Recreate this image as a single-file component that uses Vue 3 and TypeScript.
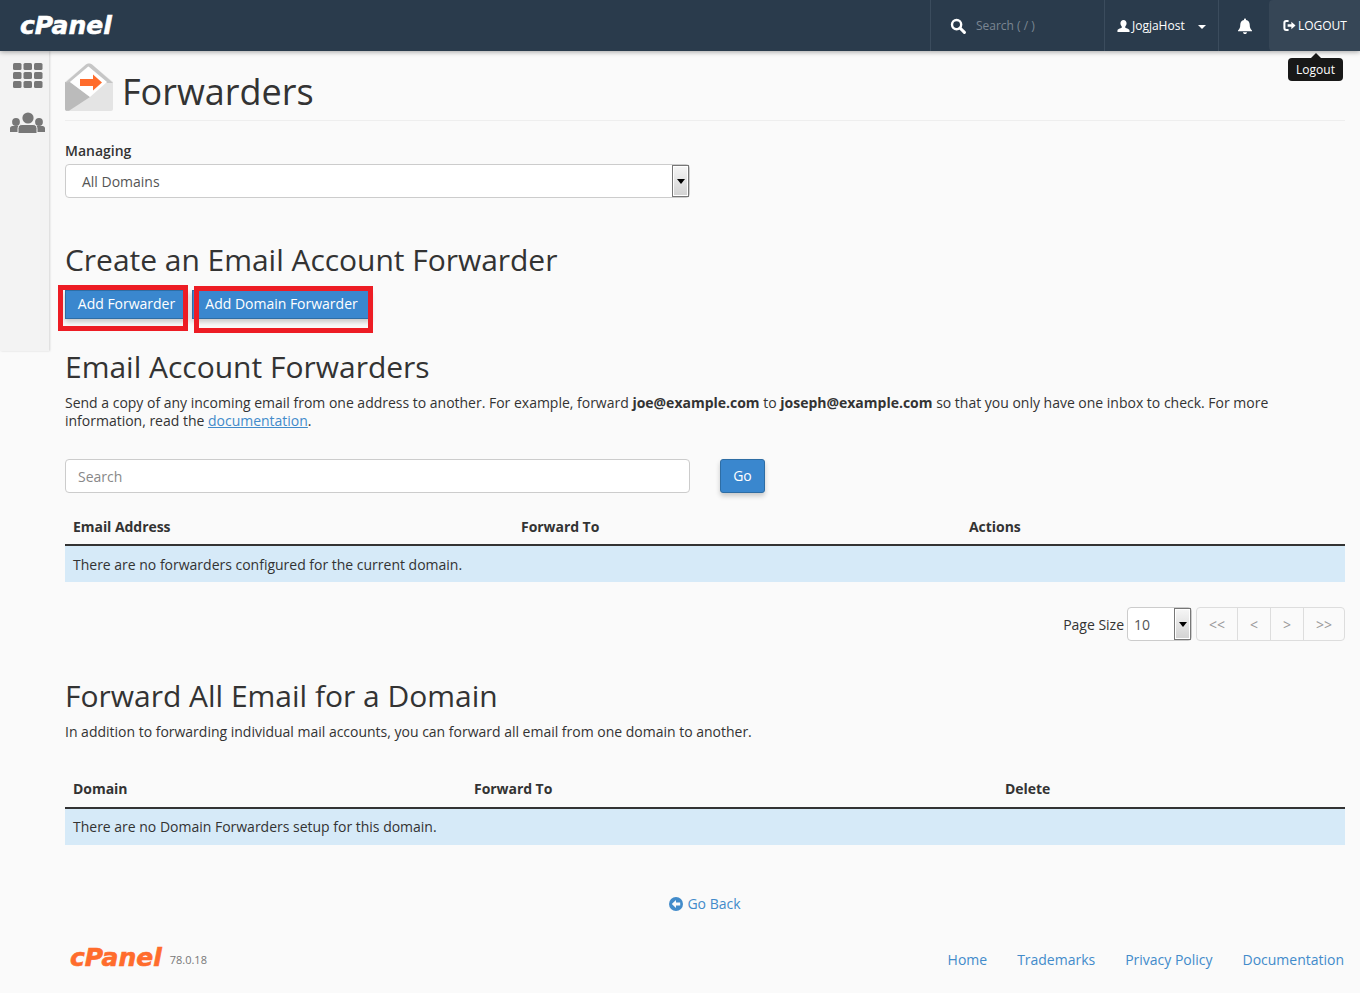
<script setup lang="ts">
const footerLinks: string[] = ['Home', 'Trademarks', 'Privacy Policy', 'Documentation']
</script>

<template>
  <div class="page">
    <header class="topbar">
      <span class="logo">cPanel</span>
      <div class="top-right">
        <div class="tsearch">
          <svg class="ic-search" viewBox="0 0 16 16" width="16" height="16"><circle cx="6.600" cy="6.600" r="4.600" fill="none" stroke="#fff" stroke-width="2.400"/><path d="M10 10l4.400 4.400" stroke="#fff" stroke-width="3" stroke-linecap="round"/></svg>
          <span class="tsearch-text">Search ( / )</span>
        </div>
        <div class="tuser">
          <svg viewBox="0 0 14 14" width="13" height="14"><path d="M7 .5c2 0 3.300 1.500 3.300 3.600 0 1.400-.6 2.700-1.400 3.500v1.200c1.500.6 4.600 1.300 4.600 3.200v1.500H.5V12c0-1.900 3.100-2.600 4.600-3.200V7.600C4.300 6.800 3.700 5.500 3.700 4.100 3.700 2 5 .5 7 .5z" fill="#fff"/></svg>
          <span class="tuser-name">JogjaHost</span>
          <i class="caret"></i>
        </div>
        <div class="tbell">
          <svg viewBox="0 0 16 16" width="16" height="16"><path d="M8 0.500c.6 0 1 .4 1 1v.5c2.300.4 3.700 2.300 3.700 4.600 0 3.600 1 4.700 2.300 5.900v.8H1v-.8c1.300-1.200 2.300-2.300 2.300-5.900C3.300 4.300 4.700 2.400 7 2v-.5c0-.6.4-1 1-1zM6 14.200h4c0 1.100-.9 1.800-2 1.800s-2-.7-2-1.800z" fill="#fff"/></svg>
        </div>
        <div class="tlogout">
          <svg viewBox="0 0 14 14" width="13" height="13"><path d="M6 2.200H3.500C2.300 2.200 1.500 3 1.500 4.200v5.600c0 1.200.8 2 2 2H6" fill="none" stroke="#fff" stroke-width="2.200"/><path d="M5 5.700h4V2.900L13.500 7 9 11.100V8.300H5z" fill="#fff"/></svg>
          <span>LOGOUT</span>
        </div>
      </div>
    </header>

    <aside class="sidebar">
      <svg viewBox="0 0 30 26" width="30" height="26" class="side-grid">
        <g fill="#777">
          <rect x="0" y="0" width="8.500" height="7" rx="1.500"/><rect x="10.500" y="0" width="8.500" height="7" rx="1.500"/><rect x="21" y="0" width="8.500" height="7" rx="1.500"/>
          <rect x="0" y="9" width="8.500" height="7" rx="1.500"/><rect x="10.500" y="9" width="8.500" height="7" rx="1.500"/><rect x="21" y="9" width="8.500" height="7" rx="1.500"/>
          <rect x="0" y="18" width="8.500" height="7" rx="1.500"/><rect x="10.500" y="18" width="8.500" height="7" rx="1.500"/><rect x="21" y="18" width="8.500" height="7" rx="1.500"/>
        </g>
      </svg>
      <svg viewBox="0 0 35 22" width="35" height="22" class="side-users">
        <g fill="#777">
          <circle cx="18" cy="6" r="5.600"/><circle cx="6" cy="10" r="3.900"/><circle cx="29" cy="10" r="3.900"/>
          <path d="M0 20v-3.500c0-1.500 1-2.500 2.500-2.500h6v6zM35 20v-3.500c0-1.500-1-2.500-2.500-2.500h-6v6z"/>
          <path d="M8 21.500v-5c0-2.500 1.800-4 4-4h11c2.200 0 4 1.500 4 4v5z" stroke="#f3f3f3" stroke-width="1"/>
        </g>
      </svg>
    </aside>

    <div class="tooltip"><i class="tip-arrow"></i>Logout</div>

    <main class="content">
      <div class="title-row">
        <svg viewBox="0 0 48 48" width="48" height="48">
          <path d="M0 19L21 1.500c1.800-1.500 4.200-1.500 6 0L48 19v27c0 1-1 2-2 2H2c-1 0-2-1-2-2z" fill="#e4e4e4"/>
          <path d="M0 19v27c0 1 .8 1.800 1.800 1.800H4L25 34 5 19z" fill="#bbb"/>
          <path d="M0 20L21 1.500c1.800-1.500 4.200-1.500 6 0L48 20l-6 0L23 3.500 5 19z" fill="#c6c6c6"/>
          <path d="M23.500 3.500L42 19 25 34 5 19z" fill="#fff"/>
          <path d="M15 16h13v-4.500l9 8-9 8V23H15z" fill="#ff6c2c"/>
        </svg>
        <h1>Forwarders</h1>
      </div>

      <label class="lbl">Managing</label>
      <div class="fake-select main-select">
        <span>All Domains</span>
        <i class="sel-btn"><b></b></i>
      </div>

      <h2 class="h-create">Create an Email Account Forwarder</h2>
      <div class="btn-row">
        <button class="btn b1">Add Forwarder<i class="mark m1"></i></button>
        <button class="btn b2">Add Domain Forwarder<i class="mark m2"></i></button>
      </div>

      <h2 class="h-accounts">Email Account Forwarders</h2>
      <p class="desc">Send a copy of any incoming email from one address to another. For example, forward <strong>joe@example.com</strong> to <strong>joseph@example.com</strong> so that you only have one inbox to check. For more information, read the <a href="#" class="doc">documentation</a>.</p>

      <div class="search-row">
        <input class="search" placeholder="Search" />
        <button class="btn go">Go</button>
      </div>

      <table class="tbl t1">
        <thead><tr><th class="c1">Email Address</th><th class="c2">Forward To</th><th>Actions</th></tr></thead>
        <tbody><tr><td colspan="3">There are no forwarders configured for the current domain.</td></tr></tbody>
      </table>

      <div class="pager-row">
        <span class="ps">Page Size</span>
        <div class="fake-select small-select">
          <span>10</span>
          <i class="sel-btn"><b></b></i>
        </div>
        <div class="pager">
          <span class="p1">&lt;&lt;</span><span class="p2">&lt;</span><span class="p3">&gt;</span><span class="p4">&gt;&gt;</span>
        </div>
      </div>

      <h2 class="h-all">Forward All Email for a Domain</h2>
      <p class="desc2">In addition to forwarding individual mail accounts, you can forward all email from one domain to another.</p>

      <table class="tbl t2">
        <thead><tr><th class="d1">Domain</th><th class="d2">Forward To</th><th>Delete</th></tr></thead>
        <tbody><tr><td colspan="3">There are no Domain Forwarders setup for this domain.</td></tr></tbody>
      </table>

      <div class="goback">
        <svg viewBox="0 0 14 14" width="14" height="14"><circle cx="7" cy="7" r="7" fill="#428bca"/><path d="M2.800 7L7 3v2.500h4.200v3H7V11z" fill="#fafafa"/></svg>
        <a href="#">Go Back</a>
      </div>

      <footer class="foot">
        <div class="foot-left">
          <span class="foot-logo">cPanel</span>
          <span class="ver">78.0.18</span>
        </div>
        <nav class="foot-links">
          <a v-for="l in footerLinks" :key="l" href="#">{{ l }}</a>
        </nav>
      </footer>
    </main>
  </div>
</template>

<style>
html, body { margin: 0; background: #fafafa; }
</style>

<style scoped>
.page { position: relative; height: 993px; overflow: hidden; background: #fafafa; font-family: "Open Sans", sans-serif; font-size: 14px; color: #333; line-height: 18px; letter-spacing: -.008px; }
.topbar { position: relative; z-index: 3; height: 51px; background: #2a3b4c; box-shadow: 0 1px 5px rgba(0,0,0,.35); display: flex; justify-content: space-between; }
.logo { margin-left: 20px; font-family: "DejaVu Sans", sans-serif; font-weight: 700; font-style: italic; font-size: 25px; line-height: 51px; letter-spacing: 0; color: #fff; -webkit-text-stroke: .6px #fff; }
.top-right { display: flex; height: 51px; color: #fff; font-size: 12px; }
.tsearch { width: 174px; border-left: 1px solid #3b4c5d; display: flex; align-items: center; box-sizing: border-box; padding-left: 19px; }
.tsearch-text { margin-left: 10px; color: #7a8692; }
.tuser { width: 114px; box-sizing: border-box; border-left: 1px solid #3b4c5d; display: flex; align-items: center; padding-left: 12px; }
.tuser-name { margin-left: 2px; }
.caret { margin-left: 13px; margin-top: 2px; border: 4px solid transparent; border-top-color: #fff; border-bottom: 0; }
.tbell { width: 51px; box-sizing: border-box; border-left: 1px solid #3b4c5d; display: flex; align-items: center; justify-content: center; padding-left: 2px; }
.tlogout { width: 91px; box-sizing: border-box; background: #364656; display: flex; align-items: center; padding-left: 14px; gap: 2px; border-radius: 4px 0 0 4px; }

.sidebar { position: absolute; left: 0; top: 51px; width: 49px; height: 300px; background: #f3f3f3; box-shadow: 1px 0 2px rgba(0,0,0,.15); z-index: 1; }
.side-grid { position: absolute; left: 13px; top: 12px; }
.side-users { position: absolute; left: 10px; top: 61px; }

.tooltip { position: absolute; z-index: 4; left: 1288px; top: 58px; width: 55px; height: 23px; line-height: 23px; text-align: center; background: #181818; color: #fff; font-size: 12px; border-radius: 4px; }
.tip-arrow { position: absolute; left: 23px; top: -5px; border: 5px solid transparent; border-top: 0; border-bottom-color: #181818; }

.content { position: relative; z-index: 2; padding: 12px 15px 0 65px; }
.title-row { display: flex; gap: 9px; height: 57px; border-bottom: 1px solid #eee; margin-bottom: 21px; align-items: flex-start; }
h1 { margin: 0; font-size: 36px; font-weight: 400; line-height: 58px; color: #333; }
.lbl { display: block; font-weight: 600; line-height: 18px; margin-bottom: 4px; }
.fake-select { position: relative; box-sizing: border-box; background: #fff; border: 1px solid #ccc; border-radius: 4px; color: #555; display: flex; align-items: center; }
.main-select { width: 625px; height: 34px; padding: 1px 0 0 16px; }
.small-select { width: 65px; height: 34px; padding: 1px 0 0 6px; }
.sel-btn { position: absolute; right: 0; top: 0; bottom: 0; width: 17px; box-sizing: border-box; border: 1px solid #777; box-shadow: inset 0 0 0 1px #fff; background: linear-gradient(#f6f6f6, #d2d2d2); display: flex; align-items: center; justify-content: center; }
.sel-btn b { border: 4px solid transparent; border-top: 5px solid #000; border-bottom: 0; }

h2 { margin: 0; font-size: 30px; font-weight: 400; line-height: 34px; color: #333; }
.h-create { margin-top: 45px; letter-spacing: -.03px; }
.btn-row { display: flex; gap: 4px; margin-top: 13px; }
.btn { position: relative; height: 29px; border: 1px solid #2e6da4; background: #3a87ce; color: #fff; font: inherit; letter-spacing: inherit; padding: 0; white-space: nowrap; border-radius: 0; box-shadow: 0 3px 5px rgba(0,0,0,.2); }
.b1 { width: 123px; padding-bottom: 2px; }
.b2 { width: 179px; padding-bottom: 2px; }
.mark { position: absolute; border: 5px solid #ed1c24; box-sizing: border-box; }
.m1 { left: -8px; top: -6px; width: 130px; height: 46px; }
.m2 { left: 1px; top: -5px; width: 179px; height: 47px; }

.h-accounts { margin-top: 31px; }
.desc { margin: 10px 0 0; }
.desc strong { font-weight: 700; }
.doc { color: #428bca; text-decoration: underline; }
.search-row { display: flex; align-items: flex-start; margin-top: 29px; gap: 30px; }
.search { box-sizing: border-box; width: 625px; height: 34px; border: 1px solid #ccc; border-radius: 4px; padding: 0 12px; font: inherit; background: #fff; color: #555; outline: none; }
.search::placeholder { color: #888; opacity: 1; }
.go { width: 45px; height: 34px; border-radius: 3px; }

.tbl { width: 1280px; border-collapse: collapse; table-layout: fixed; }
.t1 { margin-top: 16px; }
.t2 { margin-top: 30px; }
th { text-align: left; font-weight: 700; padding: 8px 8px 7px; line-height: 20px; height: 20px; border-bottom: 2px solid #333; letter-spacing: -.05px; }
td { padding: 9px 8px 7px; line-height: 20px; background: #d6eaf8; }
.t2 th { padding-bottom: 8px; }
.t2 td { padding: 8px; }
.c1, .c2 { width: 432px; }
.d1 { width: 385px; }
.d2 { width: 515px; }

.pager-row { display: flex; justify-content: flex-end; align-items: center; margin-top: 25px; height: 34px; }
.ps { margin-right: 3px; padding-top: 1px; }
.pager { display: flex; margin-left: 4px; height: 34px; box-sizing: border-box; border: 1px solid #ddd; border-radius: 4px; color: #999; }
.pager span { display: flex; align-items: center; justify-content: center; box-sizing: border-box; border-right: 1px solid #ddd; padding-top: 1px; }
.pager .p4 { border-right: 0; }
.p1 { width: 41px; } .p2 { width: 33px; } .p3 { width: 33px; } .p4 { width: 40px; }

.h-all { margin-top: 38px; }
.desc2 { margin: 10px 0 0; }

.goback { display: flex; align-items: center; justify-content: center; gap: 4px; margin-top: 50px; height: 18px; }
.goback a { color: #428bca; text-decoration: none; }

.foot { display: flex; justify-content: space-between; align-items: center; margin-top: 34px; height: 26px; }
.foot-left { display: flex; align-items: center; margin-left: 5px; }
.foot-logo { font-family: "DejaVu Sans", sans-serif; font-weight: 700; font-style: italic; font-size: 25px; line-height: 26px; letter-spacing: 0; color: #ff6c2c; -webkit-text-stroke: .6px #ff6c2c; margin-top: -5px; }
.ver { font-size: 11px; color: #777; margin-left: 8px; line-height: 18px; }
.foot-links { display: flex; gap: 30px; padding-right: 1px; }
.foot-links a { color: #428bca; text-decoration: none; }
</style>
